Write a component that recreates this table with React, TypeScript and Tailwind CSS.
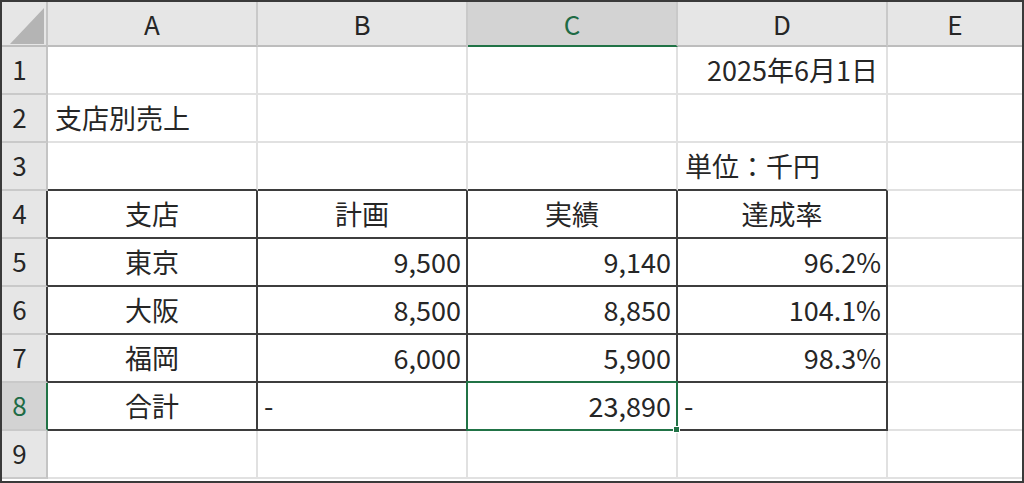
import React from "react";

type Align = "left" | "right" | "center";
type Cell = { t: string; a: Align };

const COLS = ["A", "B", "C", "D", "E"];

const data: Record<number, Record<number, Cell>> = {
  1: { 3: { t: "2025年6月1日", a: "right" } },
  2: { 0: { t: "支店別売上", a: "left" } },
  3: { 3: { t: "単位：千円", a: "left" } },
  4: {
    0: { t: "支店", a: "center" },
    1: { t: "計画", a: "center" },
    2: { t: "実績", a: "center" },
    3: { t: "達成率", a: "center" },
  },
  5: {
    0: { t: "東京", a: "center" },
    1: { t: "9,500", a: "right" },
    2: { t: "9,140", a: "right" },
    3: { t: "96.2%", a: "right" },
  },
  6: {
    0: { t: "大阪", a: "center" },
    1: { t: "8,500", a: "right" },
    2: { t: "8,850", a: "right" },
    3: { t: "104.1%", a: "right" },
  },
  7: {
    0: { t: "福岡", a: "center" },
    1: { t: "6,000", a: "right" },
    2: { t: "5,900", a: "right" },
    3: { t: "98.3%", a: "right" },
  },
  8: {
    0: { t: "合計", a: "center" },
    1: { t: "-", a: "left" },
    2: { t: "23,890", a: "right" },
    3: { t: "-", a: "left" },
  },
};

const alignClass: Record<Align, string> = {
  left: "justify-start pl-[6px]",
  right: "justify-end pr-[5px]",
  center: "justify-center",
};

function DataCell({ r, c }: { r: number; c: number }) {
  const cell = data[r]?.[c];
  const inTable = r >= 4 && r <= 8 && c <= 3;
  const aboveTable = r === 3 && c <= 3;
  const selected = r === 8 && c === 2;
  const last = c === 4;

  let cls =
    "flex items-center pb-[2px] bg-white text-[27px] leading-none text-[#262626] whitespace-nowrap ";
  if (selected) cls += "relative z-10 ";
  if (inTable) {
    cls += "border-b-2 border-b-[#3d3d3d] border-r-2 border-r-[#3d3d3d] ";
  } else if (aboveTable) {
    cls += "border-b-2 border-b-[#3d3d3d] border-r-2 border-r-[#e1e1e1] ";
  } else {
    cls += "border-b-2 border-b-[#e1e1e1] " + (last ? "" : "border-r-2 border-r-[#e1e1e1] ");
  }
  if (cell) {
    let a = alignClass[cell.a];
    if (r === 1) a = "justify-end pr-[8px]";
    if (r === 3) a = "justify-start pl-[7px]";
    if (r === 2) a = "justify-start pl-[7px]";
    cls += a;
  }
  return (
    <div className={cls}>
      {cell && <span>{cell.t}</span>}
      {selected && (
        <div className="pointer-events-none absolute -inset-[2px] border-2 border-[#217346]">
          <div className="absolute right-[-4px] bottom-[-4px] h-[7px] w-[7px] bg-[#217346] border border-white" />
        </div>
      )}
    </div>
  );
}

export default function App() {
  const rows = [1, 2, 3, 4, 5, 6, 7, 8, 9];
  return (
    <div
      className="w-[1024px] h-[483px] border-2 border-[#3a3a3a] bg-white overflow-hidden"
      style={{ fontFamily: '"Noto Sans CJK JP", "Noto Sans", sans-serif' }}
    >
      <div className="grid h-full grid-cols-[46px_210px_210px_210px_210px_1fr] grid-rows-[45px_repeat(9,48px)]">
        {/* corner */}
        <div className="flex items-end justify-end pr-[1px] pb-[1px] bg-[#e6e6e6] border-r-2 border-r-[#c4c4c4] border-b-2 border-b-[#bdbdbd]">
          <svg width="35" height="36" viewBox="0 0 35 36">
            <polygon points="34,0 34,36 0,36" fill="#b4b4b4" />
          </svg>
        </div>
        {COLS.map((col, i) => {
          const sel = i === 2;
          return (
            <div
              key={col}
              className={
                "flex items-center justify-center pt-[1px] text-[26px] leading-none border-b-2 " +
                (i < 4 ? "border-r-2 border-r-[#c9c9c9] " : "") +
                (sel
                  ? "bg-[#d3d3d3] text-[#1e6b45] border-b-[#217346]"
                  : "bg-[#e6e6e6] text-[#262626] border-b-[#bdbdbd]")
              }
            >
              {col}
            </div>
          );
        })}
        {rows.map((r) => {
          const sel = r === 8;
          const tableRow = r >= 4 && r <= 7;
          return (
            <React.Fragment key={r}>
              <div
                className={
                  "flex items-center justify-center pb-[2px] pr-[9px] text-[26px] leading-none border-r-2 border-b-2 border-b-[#c9c9c9] " +
                  (sel
                    ? "bg-[#d3d3d3] text-[#1e6b45] border-r-[#217346]"
                    : tableRow
                    ? "bg-[#e6e6e6] text-[#262626] border-r-[#3d3d3d]"
                    : "bg-[#e6e6e6] text-[#262626] border-r-[#c4c4c4]")
                }
              >
                {r}
              </div>
              {COLS.map((_, c) => (
                <DataCell key={c} r={r} c={c} />
              ))}
            </React.Fragment>
          );
        })}
      </div>
    </div>
  );
}
